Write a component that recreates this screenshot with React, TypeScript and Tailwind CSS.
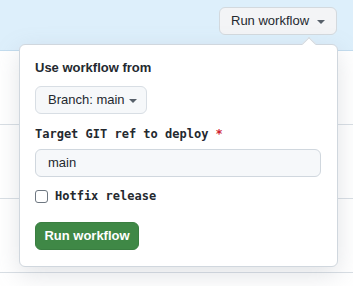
import React from "react";

const Caret = ({ className = "" }: { className?: string }) => (
  <svg width="8" height="4" viewBox="0 0 8 4" className={className}>
    <path d="M0 0 L8 0 L4 4 Z" fill="currentColor" />
  </svg>
);

export default function App() {
  return (
    <div
      className="relative w-[353px] h-[286px] overflow-hidden bg-white text-[#24292f]"
      style={{ fontFamily: '"Liberation Sans", Arial, sans-serif' }}
    >
      <div className="h-[51px] bg-[#ddeffb] border-b border-[#c3dcee] flex justify-end items-start pt-[7px] pr-[16px]">
        <button className="h-[28px] w-[118px] flex items-center gap-[8px] pl-[11px] rounded-[6px] border border-[#d3d9de] bg-[#f3f4f6] text-[13px]">
          <span>Run workflow</span>
          <Caret className="text-[#57606a] mt-[1px]" />
        </button>
      </div>
      <div className="h-[74px] border-b border-[#d8dee4]" />
      <div className="h-[74px] border-b border-[#d8dee4]" />
      <div className="h-[74px] border-b border-[#d8dee4]" />

      <div className="absolute left-[19px] top-[44px] w-[319px] h-[223px] bg-white border border-[#d0d7de] rounded-[6px] shadow-[0_8px_24px_rgba(140,149,159,0.25)] px-[15px] pt-[13px]">
        <div className="absolute top-[-6px] left-[284px] w-[10px] h-[10px] bg-white border-l border-t border-[#d0d7de] rotate-45" />
        <div className="text-[13px] font-semibold leading-[20px]">Use workflow from</div>
        <button className="mt-[8px] h-[28px] w-[112px] flex items-center gap-[4px] pl-[12px] rounded-[6px] border border-[#d8dee4] bg-[#f6f8fa] text-[13px]">
          <span>Branch: main</span>
          <Caret className="text-[#57606a] mt-[1px]" />
        </button>
        <div
          className="mt-[10px] text-[12px] font-bold leading-[20px] flex items-center"
          style={{ fontFamily: '"DejaVu Sans Mono", monospace' }}
        >
          <span>Target GIT ref to deploy</span>
          <span className="text-[#cf222e] ml-[7px]">*</span>
        </div>
        <div className="mt-[5px] h-[28px] w-[286px] rounded-[6px] border border-[#d0d7de] bg-[#f6f8fa] flex items-center pl-[12px] text-[13px]">
          main
        </div>
        <div className="mt-[12px] flex items-center gap-[7px] h-[14px]">
          <div className="w-[13px] h-[13px] rounded-[3px] border border-[#6e7781] bg-white" />
          <span
            className="text-[12px] font-bold"
            style={{ fontFamily: '"DejaVu Sans Mono", monospace' }}
          >
            Hotfix release
          </span>
        </div>
        <button className="mt-[19px] h-[28px] w-[104px] flex items-center justify-center rounded-[6px] bg-[#3f8846] border border-[#3a7e41] text-white text-[13px] font-semibold">
          Run workflow
        </button>
      </div>
    </div>
  );
}
